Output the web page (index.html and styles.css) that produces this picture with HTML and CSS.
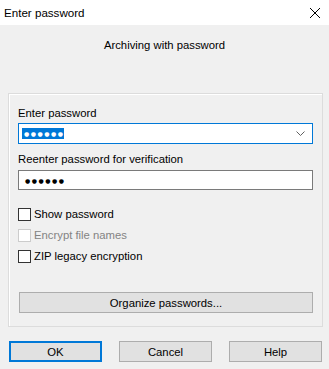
FILE: index.html
```html
<!DOCTYPE html>
<html>
<head>
<meta charset="utf-8">
<link rel="stylesheet" href="styles.css">
</head>
<body>
<div class="window">
  <div class="titlebar">
    <span class="title">Enter password</span>
    <svg class="close" width="12" height="12" viewBox="0 0 12 12"><path d="M1 1 L11 11 M11 1 L1 11" stroke="#000" stroke-width="1" fill="none"/></svg>
  </div>
  <div class="client">
    <div class="header">Archiving with password</div>
    <div class="group">
      <div class="label">Enter password</div>
      <div class="combo">
        <span class="sel">●●●●●●</span>
        <svg class="chev" width="9" height="5" viewBox="0 0 9 5"><path d="M0.5 0.5 L4.5 4.5 L8.5 0.5" stroke="#606060" stroke-width="1" fill="none"/></svg>
      </div>
      <div class="label label2">Reenter password for verification</div>
      <div class="field"><span class="dots">●●●●●●</span></div>
      <div class="checks">
        <div class="check"><span class="box"></span><span>Show password</span></div>
        <div class="check disabled"><span class="box"></span><span>Encrypt file names</span></div>
        <div class="check"><span class="box"></span><span>ZIP legacy encryption</span></div>
      </div>
      <div class="btn organize">Organize passwords...</div>
    </div>
    <div class="buttons">
      <div class="btn default">OK</div>
      <div class="btn">Cancel</div>
      <div class="btn">Help</div>
    </div>
  </div>
</div>
</body>
</html>
```
FILE: styles.css
```css
html, body {
  margin: 0;
  padding: 0;
}
body {
  width: 329px;
  height: 369px;
  overflow: hidden;
  font-family: "Liberation Sans", Arial, sans-serif;
  font-size: 11.3px;
  color: #000;
  background: #f0f0f0;
}
.window {
  width: 329px;
  height: 369px;
  display: flex;
  flex-direction: column;
}
.titlebar {
  height: 25px;
  background: #fff;
  display: flex;
  align-items: center;
  justify-content: space-between;
  padding: 0 8px 0 4px;
  box-sizing: border-box;
}
.title {
  line-height: 16px;
  font-size: 11.6px;
}
.close {
  display: block;
}
.client {
  flex: 1;
  background: #f0f0f0;
  display: flex;
  flex-direction: column;
}
.header {
  text-align: center;
  line-height: 16px;
  margin-top: 12px;
  height: 16px;
}
.group {
  margin: 40px 6px 0 8px;
  border: 1px solid #dcdcdc;
  box-shadow: inset 1px 1px 0 #fff;
  height: 234px;
  box-sizing: border-box;
  padding: 11px 9px 0 9px;
  display: flex;
  flex-direction: column;
}
.label {
  line-height: 16px;
  height: 16px;
}
.combo {
  margin-top: 2px;
  height: 21px;
  box-sizing: border-box;
  border: 1px solid #0078d7;
  background: #fff;
  display: flex;
  align-items: center;
  justify-content: space-between;
  padding: 0 7px 0 3px;
}
.sel {
  background: #0078d7;
  color: #fff;
  font-family: "DejaVu Sans", sans-serif;
  font-size: 6px;
  letter-spacing: 1.5px;
  line-height: 11px;
  height: 11px;
  padding: 0 0 0 2px;
}
.chev {
  display: block;
}
.label2 {
  margin-top: 7px;
}
.field {
  margin-top: 3px;
  height: 20px;
  box-sizing: border-box;
  border: 1px solid #7a7a7a;
  background: #fff;
  display: flex;
  align-items: center;
  padding-left: 6px;
}
.dots {
  font-family: "DejaVu Sans", sans-serif;
  font-size: 6px;
  letter-spacing: 1.5px;
  line-height: 11px;
}
.checks {
  margin-top: 16px;
  display: flex;
  flex-direction: column;
  gap: 5px;
}
.check {
  display: flex;
  align-items: center;
  height: 16px;
  line-height: 16px;
  gap: 3px;
}
.box {
  width: 13px;
  height: 13px;
  box-sizing: border-box;
  border: 1px solid #333;
  background: #fff;
}
.check.disabled {
  color: #838383;
}
.check.disabled .box {
  border-color: #cccccc;
}
.btn {
  height: 21px;
  box-sizing: border-box;
  border: 1px solid #adadad;
  background: #e1e1e1;
  display: flex;
  align-items: center;
  justify-content: center;
  line-height: 16px;
}
.organize {
  margin-top: 28px;
  margin-left: 1px;
}
.buttons {
  margin: 14px 7px 0 9px;
  display: flex;
  justify-content: space-between;
}
.buttons .btn {
  width: 93px;
}
.btn.default {
  border: 2px solid #0078d7;
}
```
